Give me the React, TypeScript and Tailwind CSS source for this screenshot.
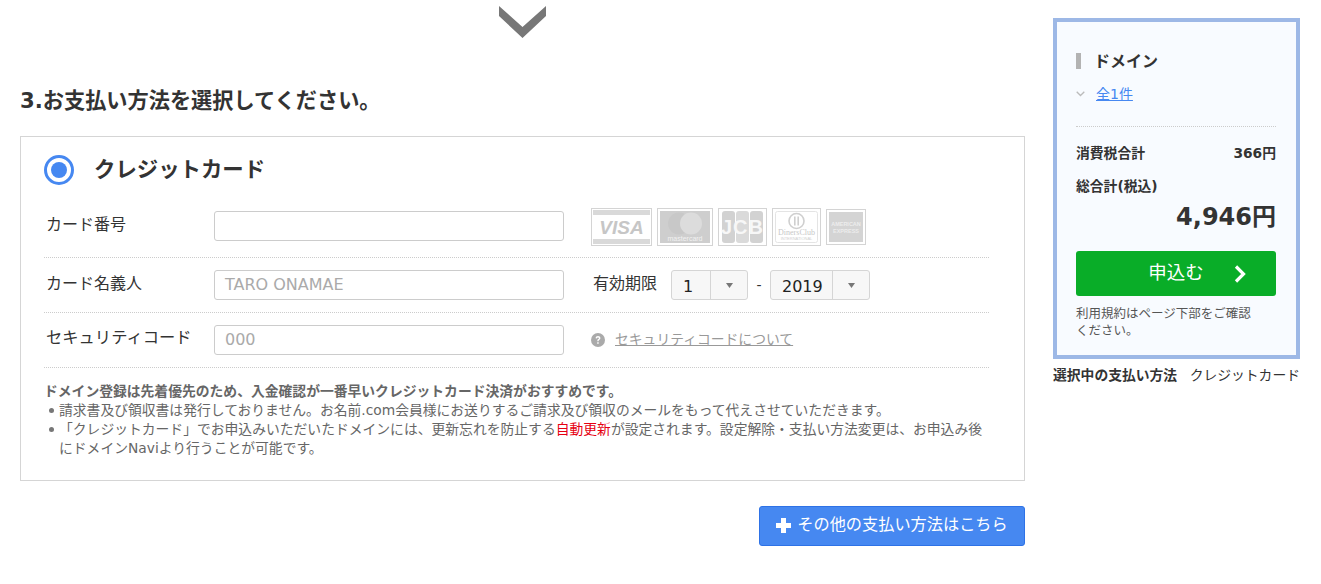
import React from "react";

function Visa() {
  return (
    <div className="w-[61px] h-[38px] border border-[#d4d4d4] p-px flex flex-col justify-between bg-white">
      <div className="h-[5px] bg-[#d9d9d9]" />
      <span className="text-[19px] leading-none font-bold italic text-[#c6c6c6] text-center font-['Liberation_Sans',sans-serif]">VISA</span>
      <div className="h-[5px] bg-[#d9d9d9]" />
    </div>
  );
}

function Master() {
  return (
    <div className="w-[56px] h-[38px] border border-[#d4d4d4] p-[2px] bg-white">
      <svg viewBox="0 0 50 32" className="w-full h-full block">
        <rect width="50" height="32" fill="#cecece" />
        <circle cx="19" cy="12.5" r="11" fill="#c8c8c8" />
        <circle cx="31" cy="12.5" r="11" fill="#dcdcdc" />
        <text x="25" y="29.5" textAnchor="middle" fontSize="7" fill="#f2f2f2" fontFamily="Liberation Sans, sans-serif">mastercard</text>
      </svg>
    </div>
  );
}

function Jcb() {
  return (
    <div className="w-[49px] h-[38px] border border-[#d4d4d4] p-[2px] bg-white">
      <svg viewBox="0 0 43 32" className="w-full h-full block">
        <rect x="1" y="0" width="13" height="32" rx="3" fill="#d2d2d2" />
        <rect x="15" y="0" width="13" height="32" rx="3" fill="#dadada" />
        <rect x="29" y="0" width="13" height="32" rx="3" fill="#d2d2d2" />
        <text x="21.5" y="23" textAnchor="middle" fontSize="20" fontWeight="700" letterSpacing="1" fill="#f7f7f7" fontFamily="Liberation Sans, sans-serif">JCB</text>
      </svg>
    </div>
  );
}

function Diners() {
  return (
    <div className="w-[49px] h-[38px] border border-[#d4d4d4] p-[2px] bg-white">
      <svg viewBox="0 0 43 32" className="w-full h-full block">
        <rect x="0.5" y="0.5" width="42" height="31" rx="2" fill="#fff" stroke="#e4e4e4" />
        <circle cx="21.5" cy="10" r="7.5" fill="none" stroke="#cfcfcf" strokeWidth="1.6" />
        <rect x="19" y="5.5" width="1.6" height="9" fill="#cfcfcf" />
        <rect x="22.4" y="5.5" width="1.6" height="9" fill="#cfcfcf" />
        <text x="21.5" y="24" textAnchor="middle" fontSize="8" fill="#c8c8c8" fontFamily="Liberation Serif, serif">DinersClub</text>
        <text x="21.5" y="29" textAnchor="middle" fontSize="4" fill="#cfcfcf" fontFamily="Liberation Sans, sans-serif">INTERNATIONAL</text>
      </svg>
    </div>
  );
}

function Amex() {
  return (
    <div className="w-[40px] h-[36px] border border-[#d4d4d4] p-[2px] bg-white">
      <svg viewBox="0 0 34 30" className="w-full h-full block">
        <rect width="34" height="30" fill="#d4d4d4" />
        <text x="17" y="14" textAnchor="middle" fontSize="5.5" fontWeight="700" fill="#ededed" fontFamily="Liberation Sans, sans-serif">AMERICAN</text>
        <text x="17" y="21" textAnchor="middle" fontSize="5.5" fontWeight="700" fill="#ededed" fontFamily="Liberation Sans, sans-serif">EXPRESS</text>
      </svg>
    </div>
  );
}

function Select({ value, w }: { value: string; w: string }) {
  return (
    <div className={`${w} h-[30px] flex border border-[#d5d5d5] rounded-[3px] bg-[#f7f7f7]`}>
      <span className="flex-1 pl-[11px] text-[16px] leading-[31px] text-[#222]">{value}</span>
      <span className="w-[37px] border-l border-[#d5d5d5] flex items-center justify-center">
        <svg width="7" height="5" viewBox="0 0 7 5"><path d="M0 0h7L3.5 5z" fill="#777" /></svg>
      </span>
    </div>
  );
}

export default function App() {
  return (
    <div className="flex w-[1321px] h-[584px] overflow-hidden bg-white text-[#333] font-['DejaVu_Sans','Noto_Sans_CJK_JP',sans-serif]">
      <main className="w-[1005px] ml-[20px] shrink-0">
        <div className="flex justify-center pt-[6px]">
          <svg width="47" height="32" viewBox="0 0 47 32" className="block"><path d="M0 0l23.5 21L47 0v10L23.5 32 0 10z" fill="#777" /></svg>
        </div>
        <h2 className="mt-[48px] text-[21.2px] leading-[30px] font-bold text-[#333]">3.お支払い方法を選択してください。</h2>
        <section className="mt-[20px] h-[345px] border border-[#d5d5d5] pl-[23px] pr-[35px]">
          <div className="flex items-center gap-[20px] h-[66px]">
            <span className="w-[30px] h-[30px] rounded-full border-[3px] border-[#4688f1] flex items-center justify-center">
              <span className="w-[16px] h-[16px] rounded-full bg-[#4688f1]" />
            </span>
            <span className="text-[21.4px] font-bold leading-[30px]">クレジットカード</span>
          </div>

          <div className="flex h-[55px] border-b border-dotted border-[#ccc] pl-[2px]">
            <label className="w-[168px] text-[16px] leading-[24px] pt-[10px]">カード番号</label>
            <div className="w-[350px] h-[30px] mt-[8px] border border-[#ccc] rounded-[3px] bg-white" />
            <div className="flex items-center gap-[5px] ml-[27px] h-[38px] mt-[5px]">
              <Visa /><Master /><Jcb /><Diners /><Amex />
            </div>
          </div>

          <div className="flex h-[55px] border-b border-dotted border-[#ccc] pl-[2px]">
            <label className="w-[168px] text-[16px] leading-[24px] pt-[14px]">カード名義人</label>
            <div className="w-[350px] h-[30px] mt-[12px] border border-[#ccc] rounded-[3px] bg-white pl-[10px] text-[16px] leading-[27px] text-[#aaa]">TARO ONAMAE</div>
            <label className="ml-[29px] w-[78px] text-[16px] leading-[24px] pt-[14px]">有効期限</label>
            <div className="flex items-center mt-[12px] h-[30px]">
              <Select value="1" w="w-[77px]" />
              <span className="w-[22px] text-center text-[14px]">-</span>
              <Select value="2019" w="w-[100px]" />
            </div>
          </div>

          <div className="flex h-[55px] border-b border-dotted border-[#ccc] pl-[2px]">
            <label className="w-[168px] text-[16.3px] leading-[24px] pt-[13px] whitespace-nowrap">セキュリティコード</label>
            <div className="w-[350px] h-[30px] mt-[12px] border border-[#ccc] rounded-[3px] bg-white pl-[10px] text-[16px] leading-[27px] text-[#aaa]">000</div>
            <div className="ml-[27px] mt-[11px] h-[30px] flex items-center gap-[10px]">
              <svg width="14" height="14" viewBox="0 0 14 14" className="mt-[2px]"><circle cx="7" cy="7" r="7" fill="#aaa" /><path d="M4.6 5.3C4.7 3.9 5.7 3.1 7 3.1c1.4 0 2.4.8 2.4 2 0 1-.6 1.4-1.2 1.8-.5.3-.6.5-.6 1v.3H6.3v-.5c0-.8.3-1.2.9-1.6.5-.3.8-.5.8-.9s-.4-.7-1-.7-1 .3-1.1 1zM6.2 9.2h1.5v1.6H6.2z" fill="#fff" /></svg>
              <a className="text-[13.8px] leading-[20px] text-[#999] underline">セキュリティコードについて</a>
            </div>
          </div>

          <div className="mt-[14px] text-[13.8px] leading-[19px] text-[#666]">
            <p className="font-bold">ドメイン登録は先着優先のため、入金確認が一番早いクレジットカード決済がおすすめです。</p>
            <ul>
              <li className="relative pl-[15px] before:content-[''] before:absolute before:left-[5px] before:top-[7px] before:w-[5px] before:h-[5px] before:rounded-full before:bg-[#777]">請求書及び領収書は発行しておりません。お名前.com会員様にお送りするご請求及び領収のメールをもって代えさせていただきます。</li>
              <li className="relative pl-[15px] before:content-[''] before:absolute before:left-[5px] before:top-[7px] before:w-[5px] before:h-[5px] before:rounded-full before:bg-[#777]">「クレジットカード」でお申込みいただいたドメインには、更新忘れを防止する<span className="text-[#e60012]">自動更新</span>が設定されます。設定解除・支払い方法変更は、お申込み後<br />にドメインNaviより行うことが可能です。</li>
            </ul>
          </div>
        </section>
        <div className="flex justify-end mt-[25px]">
          <button className="w-[266px] h-[40px] flex items-center justify-center gap-[6px] rounded-[3px] border border-[#2e72e6] bg-[#4688f1] text-white text-[16.2px] leading-[24px] pb-[3px]">
            <svg width="15" height="15" viewBox="0 0 15 15" className="mt-[2px]"><path d="M5 0h5v5h5v5h-5v5H5v-5H0V5h5z" fill="#fff" /></svg>
            その他の支払い方法はこちら
          </button>
        </div>
      </main>

      <aside className="w-[247px] ml-[28px] mt-[18px] shrink-0">
        <div className="h-[341px] border-[4px] border-[#9db8e6] bg-[#f8fbff] pl-[19px] pr-[20px] pt-[29px]">
          <div className="flex items-center h-[20px] gap-[13px]">
            <span className="w-[5px] h-[16px] bg-[#b3b3b3]" />
            <span className="text-[16px] font-bold text-[#333] leading-[22px] mt-[1px]">ドメイン</span>
          </div>
          <div className="flex items-center mt-[13px] gap-[11px] h-[20px]">
            <svg width="9" height="6" viewBox="0 0 9 6"><path d="M.7.7l3.8 3.8L8.3.7" fill="none" stroke="#bbb" strokeWidth="1.3" /></svg>
            <a className="text-[14px] text-[#4688f1] underline">全1件</a>
          </div>
          <div className="mt-[22px] border-t border-dotted border-[#ccc]" />
          <div className="flex justify-between mt-[16px] text-[13.8px] font-bold leading-[20px]">
            <span>消費税合計</span><span>366円</span>
          </div>
          <div className="mt-[13px] text-[13.8px] font-bold leading-[20px]">総合計(税込)</div>
          <div className="mt-[3px] text-right text-[24px] font-bold leading-[36px]">4,946円</div>
          <button className="relative mt-[16px] w-full h-[45px] rounded-[3px] bg-[#09ad28] text-white text-[18.5px] flex items-center justify-center pb-[2px]">
            申込む
            <svg className="absolute right-[28px] top-[14px]" width="14" height="18" viewBox="0 0 14 18"><path d="M2 1.5L9.5 9 2 16.5" fill="none" stroke="#fff" strokeWidth="3.2" /></svg>
          </button>
          <p className="mt-[9px] text-[12.5px] leading-[17px] text-[#555]">利用規約はページ下部をご確認<br />ください。</p>
        </div>
        <div className="flex justify-between mt-[6px] text-[13.8px] leading-[20px] whitespace-nowrap">
          <span className="font-bold">選択中の支払い方法</span>
          <span>クレジットカード</span>
        </div>
      </aside>
    </div>
  );
}
